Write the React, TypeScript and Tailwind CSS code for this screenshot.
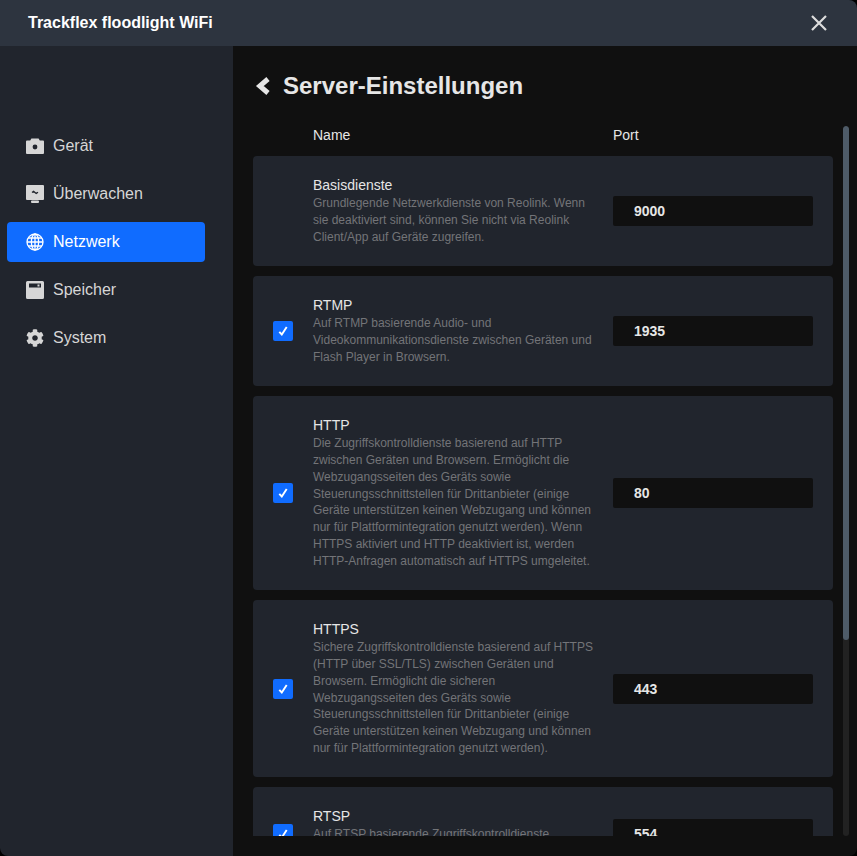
import React from 'react';
import { FaCog } from 'react-icons/fa';

const CameraIcon = () => (
  <svg viewBox="0 0 18 18" className="w-[18px] h-[18px]">
    <path fill="currentColor" d="M1 3.5h3.2L5.4 1.5h7.2l1.2 2H17a1 1 0 0 1 1 1V16a1 1 0 0 1-1 1H1a1 1 0 0 1-1-1V4.5a1 1 0 0 1 1-1z" />
    <circle cx="9" cy="10" r="2.4" fill="#21252d" />
  </svg>
);

const MonitorIcon = () => (
  <svg viewBox="0 0 18 18" className="w-[18px] h-[18px]">
    <path fill="currentColor" d="M1 0h16a1 1 0 0 1 1 1v13a1 1 0 0 1-1 1H1a1 1 0 0 1-1-1V1a1 1 0 0 1 1-1z" />
    <rect x="5" y="15.5" width="8" height="2.5" rx="1" fill="currentColor" />
    <path fill="none" stroke="#21252d" strokeWidth="1.3" d="M6 7.6l1.6-1.2 2.6 2 1.8-1.2" />
  </svg>
);

const GlobeIcon = () => (
  <svg viewBox="0 0 18 18" className="w-[18px] h-[18px]" fill="none" stroke="currentColor" strokeWidth="1.3">
    <circle cx="9" cy="9" r="8" />
    <ellipse cx="9" cy="9" rx="3.6" ry="8" />
    <path d="M9 1v16M1 9h16M2 5h14M2 13h14" />
  </svg>
);

const StorageIcon = () => (
  <svg viewBox="0 0 18 18" className="w-[18px] h-[18px]">
    <path fill="currentColor" d="M1.5 0h15A1.5 1.5 0 0 1 18 1.5v15a1.5 1.5 0 0 1-1.5 1.5h-15A1.5 1.5 0 0 1 0 16.5v-15A1.5 1.5 0 0 1 1.5 0z" />
    <rect x="3" y="2.5" width="12" height="4" fill="#21252d" />
    <rect x="11.5" y="3.5" width="2" height="2" fill="currentColor" />
  </svg>
);

const navItems = [
  { label: 'Gerät', icon: <CameraIcon /> },
  { label: 'Überwachen', icon: <MonitorIcon /> },
  { label: 'Netzwerk', icon: <GlobeIcon />, active: true },
  { label: 'Speicher', icon: <StorageIcon /> },
  { label: 'System', icon: <FaCog className="w-[18px] h-[18px]" /> },
];

const services = [
  {
    name: 'Basisdienste',
    port: '9000',
    locked: true,
    text: 'Grundlegende Netzwerkdienste von Reolink. Wenn sie deaktiviert sind, können Sie nicht via Reolink Client/App auf Geräte zugreifen.',
  },
  {
    name: 'RTMP',
    port: '1935',
    text: 'Auf RTMP basierende Audio- und Videokommunikationsdienste zwischen Geräten und Flash Player in Browsern.',
  },
  {
    name: 'HTTP',
    port: '80',
    text: 'Die Zugriffskontrolldienste basierend auf HTTP zwischen Geräten und Browsern. Ermöglicht die Webzugangsseiten des Geräts sowie Steuerungsschnittstellen für Drittanbieter (einige Geräte unterstützen keinen Webzugang und können nur für Plattformintegration genutzt werden). Wenn HTTPS aktiviert und HTTP deaktiviert ist, werden HTTP-Anfragen automatisch auf HTTPS umgeleitet.',
  },
  {
    name: 'HTTPS',
    port: '443',
    text: 'Sichere Zugriffskontrolldienste basierend auf HTTPS (HTTP über SSL/TLS) zwischen Geräten und Browsern. Ermöglicht die sicheren Webzugangsseiten des Geräts sowie Steuerungsschnittstellen für Drittanbieter (einige Geräte unterstützen keinen Webzugang und können nur für Plattformintegration genutzt werden).',
  },
  {
    name: 'RTSP',
    port: '554',
    text: 'Auf RTSP basierende Zugriffskontrolldienste zwischen Geräten.',
  },
];

const App: React.FC = () => {
  return (
    <div className="h-screen w-full bg-black font-['Liberation_Sans',Arial,sans-serif] overflow-hidden">
      <div className="h-full flex flex-col rounded-tr-[8px] rounded-b-[8px] overflow-hidden">
        <header className="h-[46px] shrink-0 bg-[#2d343f] flex items-center justify-between pl-[28px] pr-[30px]">
          <span className="text-[16px] font-bold text-white">Trackflex floodlight WiFi</span>
          <svg viewBox="0 0 16 16" className="w-4 h-4 text-[#dddddd]" fill="none" stroke="currentColor" strokeWidth="2.2">
            <path d="M1 1l14 14M15 1L1 15" />
          </svg>
        </header>

        <div className="flex-1 flex min-h-0">
          <aside className="w-[233px] shrink-0 bg-[#21252d] pt-[80px] pl-[7px] pr-[28px] flex flex-col gap-2">
            {navItems.map((item) => (
              <div
                key={item.label}
                className={
                  item.active
                    ? 'h-10 rounded bg-[#106cff] text-white flex items-center gap-[9px] pl-[19px] text-[16px]'
                    : 'h-10 rounded text-[#d6d6d6] flex items-center gap-[9px] pl-[19px] text-[16px]'
                }
              >
                {item.icon}
                <span>{item.label}</span>
              </div>
            ))}
          </aside>

          <main className="flex-1 min-w-0 bg-[#101010] flex flex-col pb-[20px]">
            <div className="h-[80px] shrink-0 flex items-center pl-[22px] gap-[13px]">
              <svg viewBox="0 0 15 18" className="w-[15px] h-[18px] text-[#e6e6e6]" fill="none" stroke="currentColor" strokeWidth="5">
                <path d="M13 2L4.800 9l8.200 7" />
              </svg>
              <h1 className="text-[24px] font-bold text-[#e6e6e6]">Server-Einstellungen</h1>
            </div>

            <div className="flex-1 min-h-0 flex pl-[20px]">
              <div className="w-[580px] overflow-hidden">
                <div className="h-[30px] flex items-start leading-[18px] text-[14px] text-[#e6e6e6] pl-[60px]">
                  <span className="w-[300px]">Name</span>
                  <span>Port</span>
                </div>
                <div className="flex flex-col gap-[10px]">
                  {services.map((s) => (
                    <div key={s.name} className="shrink-0 rounded bg-[#21252d] flex items-center p-[20px]">
                      <div className="w-[40px] shrink-0">
                        {!s.locked && (
                          <div className="w-5 h-5 rounded-[2px] bg-[#106cff] flex items-center justify-center">
                            <svg viewBox="0 0 10 10" className="w-[10px] h-[10px] text-white" fill="none" stroke="currentColor" strokeWidth="1.9">
                              <path d="M1.300 5.800L3.800 8.500L8.700 1" />
                            </svg>
                          </div>
                        )}
                      </div>
                      <div className="w-[280px] shrink-0">
                        <div className="text-[14px] leading-[19.2px] text-[#e6e6e6]">{s.name}</div>
                        <div className="text-[12px] leading-[1.4] mb-[0.4px] text-[#737478]">{s.text}</div>
                      </div>
                      <div className="ml-[20px] w-[200px] h-[30px] shrink-0 rounded-[2px] bg-[#101010] flex items-center pl-[21px] pt-[2px] text-[14px] font-bold text-[#e6e6e6]">
                        {s.port}
                      </div>
                    </div>
                  ))}
                </div>
              </div>
              <div className="ml-[10px] w-[6px] rounded-[3px] bg-[#222222] overflow-hidden">
                <div className="h-[514px] rounded-[3px] bg-[#4e5b68]" />
              </div>
            </div>
          </main>
        </div>
      </div>
    </div>
  );
};

export default App;
